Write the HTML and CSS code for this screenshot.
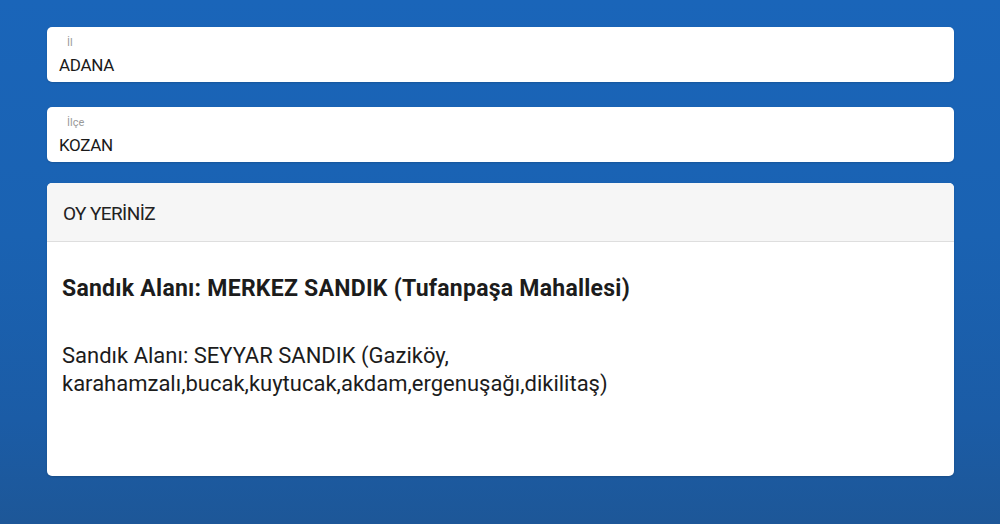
FILE: index.html
```html
<!DOCTYPE html>
<html lang="tr">
<head>
<meta charset="utf-8">
<title>Oy Yeriniz</title>
<link rel="stylesheet" href="styles.css">
</head>
<body>
<main class="page">
  <div class="field">
    <span class="field-label">İl</span>
    <span class="field-value">ADANA</span>
  </div>
  <div class="field">
    <span class="field-label">İlçe</span>
    <span class="field-value">KOZAN</span>
  </div>
  <section class="card">
    <header class="card-header">OY YERİNİZ</header>
    <div class="card-body">
      <p class="place place-main">Sandık Alanı: MERKEZ SANDIK (Tufanpaşa Mahallesi)</p>
      <p class="place">Sandık Alanı: SEYYAR SANDIK (Gaziköy, karahamzalı,bucak,kuytucak,akdam,ergenuşağı,dikilitaş)</p>
    </div>
  </section>
</main>
</body>
</html>
```

FILE: styles.css
```css
* { box-sizing: border-box; }
html, body { margin: 0; padding: 0; }
body {
  width: 1000px;
  height: 524px;
  overflow: hidden;
  font-family: Roboto, "Noto Sans", sans-serif;
  color: #1c1c1c;
  background: linear-gradient(180deg, #1a65b9 0%, #1a62b2 45%, #1b5ca6 80%, #1d5798 100%);
}
.page {
  display: flex;
  flex-direction: column;
  padding: 27px 46px 0 47px;
}
.field {
  display: flex;
  flex-direction: column;
  height: 55px;
  padding: 9px 12px 0 12px;
  background: #fff;
  border-radius: 5px;
  box-shadow: 0 1px 2px rgba(0, 0, 0, 0.15);
  margin-bottom: 25px;
}
.field + .field { margin-bottom: 21px; }
.field-label {
  font-size: 11px;
  line-height: 13px;
  color: #9a9a9a;
  padding-left: 8px;
}
.field-value {
  margin-top: 6px;
  font-size: 17px;
  line-height: 20px;
  letter-spacing: -0.3px;
  color: #1a1a1a;
}
.card {
  background: #fff;
  border-radius: 5px;
  overflow: hidden;
  box-shadow: 0 1px 2px rgba(0, 0, 0, 0.15);
}
.card-header {
  height: 59px;
  padding: 20px 16px 0 16px;
  font-size: 19px;
  line-height: 22px;
  letter-spacing: -0.6px;
  background: #f6f6f6;
  border-bottom: 1px solid #dedede;
  color: #222;
}
.card-body {
  height: 234px;
  padding: 33px 15px 0 15px;
}
.place {
  margin: 0;
  font-size: 22px;
  line-height: 28px;
  letter-spacing: 0;
  color: #1c1c1c;
}
.place-main {
  font-size: 23px;
  font-weight: 700;
  letter-spacing: 0.25px;
  margin-bottom: 39px;
}
```
